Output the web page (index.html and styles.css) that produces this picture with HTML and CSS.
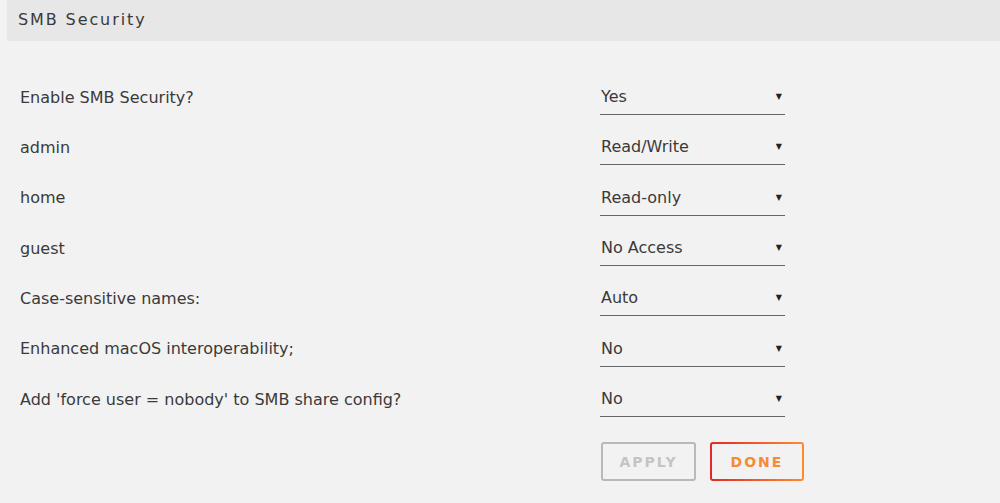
FILE: index.html
```html
<!DOCTYPE html>
<html lang="en">
<head>
    <meta charset="UTF-8">
    <title>SMB Security</title>
    <link rel="stylesheet" href="styles.css">
</head>
<body>
    <div class="title">SMB Security</div>

    <div class="form">
        <div class="row">
            <span class="label">Enable SMB Security?</span>
            <div class="select"><span>Yes</span><span class="arrow">&#9660;</span></div>
        </div>
        <div class="row">
            <span class="label">admin</span>
            <div class="select"><span>Read/Write</span><span class="arrow">&#9660;</span></div>
        </div>
        <div class="row">
            <span class="label">home</span>
            <div class="select"><span>Read-only</span><span class="arrow">&#9660;</span></div>
        </div>
        <div class="row">
            <span class="label">guest</span>
            <div class="select"><span>No Access</span><span class="arrow">&#9660;</span></div>
        </div>
        <div class="row">
            <span class="label">Case-sensitive names:</span>
            <div class="select"><span>Auto</span><span class="arrow">&#9660;</span></div>
        </div>
        <div class="row">
            <span class="label">Enhanced macOS interoperability;</span>
            <div class="select"><span>No</span><span class="arrow">&#9660;</span></div>
        </div>
        <div class="row">
            <span class="label">Add 'force user = nobody' to SMB share config?</span>
            <div class="select"><span>No</span><span class="arrow">&#9660;</span></div>
        </div>

        <div class="buttons">
            <button class="btn apply" disabled>APPLY</button>
            <button class="btn done">DONE</button>
        </div>
    </div>
</body>
</html>
```

FILE: styles.css
```css
body {
    margin: 0;
    background-color: #f2f2f2;
    font-family: "DejaVu Sans", "Noto Sans", sans-serif;
    color: #333;
}
.title {
    margin-left: 7px;
    height: 41px;
    line-height: 40px;
    padding-left: 11px;
    background-color: #e7e7e7;
    font-size: 16px;
    letter-spacing: 1.9px;
    color: #3a3a3a;
}
.form {
    padding: 31px 0 0 20px;
}
.row {
    display: flex;
    align-items: center;
    height: 50.33px;
}
.label {
    width: 580px;
    font-size: 16px;
    color: #3a3a3a;
}
.select {
    width: 184px;
    height: 35px;
    padding-left: 1px;
    display: flex;
    justify-content: space-between;
    align-items: center;
    border-bottom: 1px solid #666;
    font-size: 16px;
    color: #3a3a3a;
}
.arrow {
    font-size: 8px;
    margin-right: 3px;
    color: #222;
}
.buttons {
    display: flex;
    gap: 14px;
    margin: 18px 0 0 581px;
}
.btn {
    width: 95px;
    height: 39px;
    border-radius: 3px;
    font-family: "DejaVu Sans", sans-serif;
    font-size: 14px;
    font-weight: bold;
    letter-spacing: 2px;
    cursor: pointer;
}
.apply {
    background-color: transparent;
    border: 2px solid #b9b9b9;
    color: #c4c4c4;
}
.done {
    width: 94px;
    border: 2px solid transparent;
    background: linear-gradient(#f2f2f2, #f2f2f2) padding-box,
                linear-gradient(90deg, #e22828, #ff8b2f) border-box;
    color: #f78b34;
}
```
